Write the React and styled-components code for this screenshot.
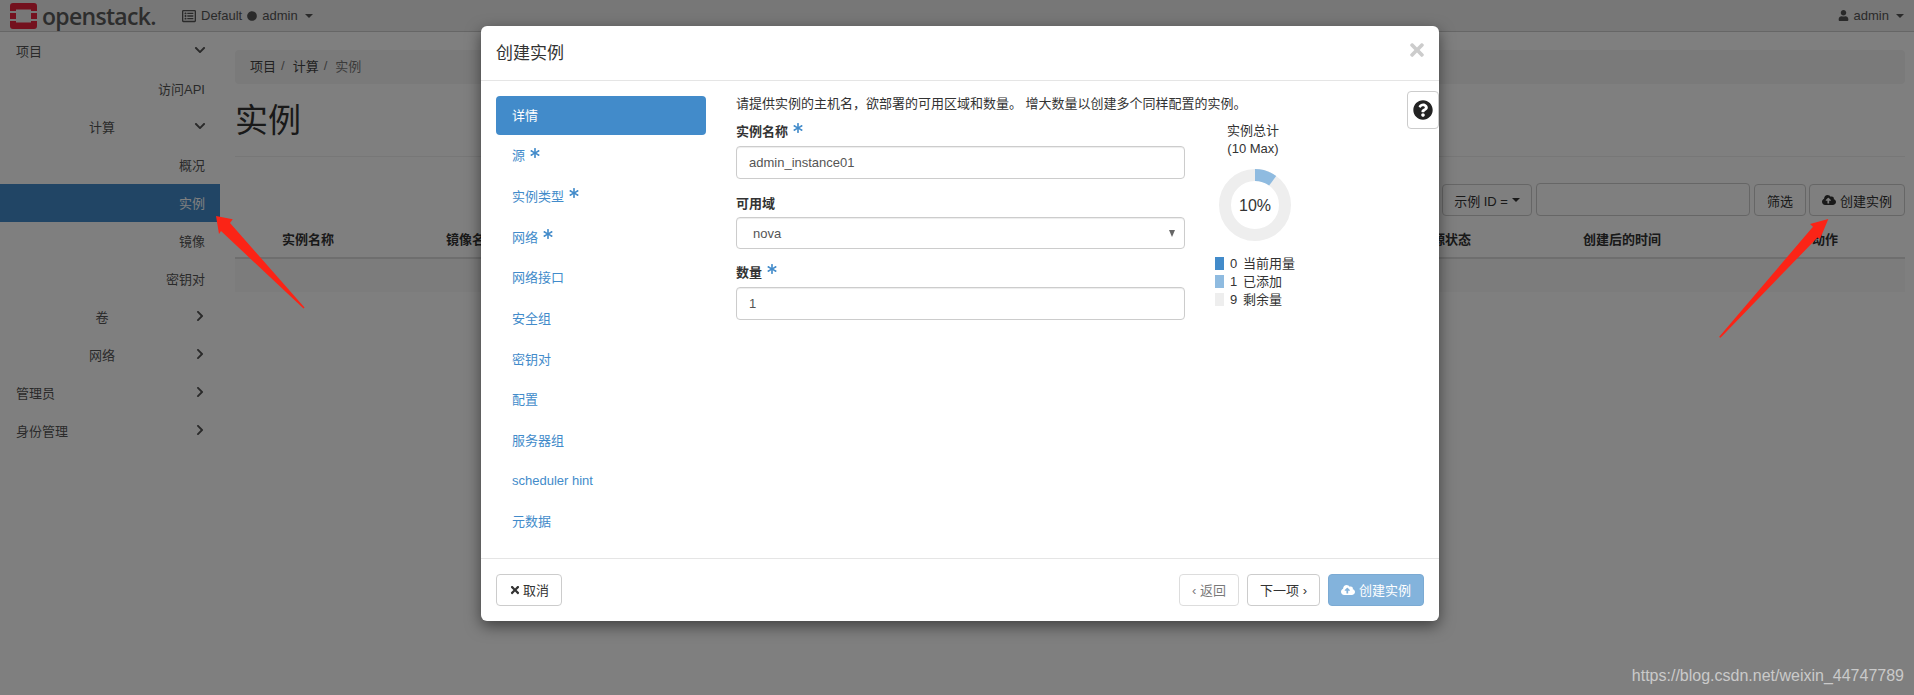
import styled, { createGlobalStyle } from 'styled-components';
import {
  FaAsterisk,
  FaChevronDown,
  FaChevronRight,
  FaCircle,
  FaCloudUploadAlt,
  FaQuestionCircle,
  FaRegListAlt,
  FaTimes,
  FaUser,
} from 'react-icons/fa';

const GlobalStyle = createGlobalStyle`
  html, body {
    margin: 0;
    height: 100%;
    background: #fff;
    font-family: "Liberation Sans", "Noto Sans CJK SC", sans-serif;
    font-size: 13px;
    color: #333;
  }
  * { box-sizing: border-box; }
`;

const Root = styled.div`
  position: relative;
  width: 100%;
  height: 100vh;
  overflow: hidden;
`;

/* page behind the dialog */
const TopBar = styled.header`
  height: 32px;
  display: flex;
  align-items: center;
  background: #eee;
  border-bottom: 1px solid #ccc;
  color: #555;
  padding: 0 10px;
`;

const Brand = styled.div`
  display: flex;
  align-items: center;
  gap: 5px;
  width: 172px;
`;

const BrandName = styled.span`
  font-family: "Open Sans", sans-serif;
  font-size: 23px;
  font-weight: 600;
  letter-spacing: -0.7px;
  line-height: 26px;
  color: #5a5a5a;
`;

const Scope = styled.div`
  display: flex;
  align-items: center;
  gap: 5px;
  font-size: 13px;
`;

const UserMenu = styled(Scope)`
  margin-left: auto;
`;

const Caret = styled.i`
  width: 0;
  height: 0;
  margin-left: 2px;
  border-top: 4px solid ${(p) => p.$color || '#555'};
  border-left: 4px solid transparent;
  border-right: 4px solid transparent;
`;

const Layout = styled.div`
  display: flex;
`;

const Sidebar = styled.nav`
  width: 220px;
  flex: none;
`;

const SideRow = styled.div`
  height: 38px;
  display: flex;
  align-items: center;
  padding: 0 15px 2px 16px;
  color: ${(p) => (p.$active ? '#fff' : '#555')};
  background: ${(p) => (p.$active ? '#428bca' : 'transparent')};
`;

const SideLabel = styled.span`
  flex: 1;
  text-align: ${(p) => ['left', 'center', 'right'][p.$level]};
`;

const SideArrow = styled.span`
  width: 18px;
  display: flex;
  justify-content: flex-end;
  color: #555;
  margin-right: -1px;
`;

const Main = styled.main`
  flex: 1;
  padding: 18px 9px 0 15px;
`;

const Breadcrumb = styled.div`
  height: 34px;
  display: flex;
  align-items: center;
  gap: 5px;
  padding: 0 0 3px 15px;
  border-radius: 4px;
  background: #f5f5f5;
`;

const Crumb = styled.span`
  color: ${(p) => (p.$current ? '#777' : '#444')};
`;

const Slash = styled.span`
  color: #777;
  margin-right: 3px;
`;

const PageHeader = styled.div`
  height: 73px;
  border-bottom: 1px solid #eee;
  padding-top: 16px;
`;

const PageTitle = styled.h1`
  margin: 0;
  font-size: 33px;
  font-weight: 400;
  line-height: 42px;
  color: #333;
`;

const FilterRow = styled.div`
  height: 33px;
  margin-top: 26px;
  display: flex;
  justify-content: flex-end;
  align-items: flex-end;
  gap: 4px;

  & > :last-child {
    margin-left: -1px;
  }
`;

const PlainButton = styled.button`
  height: 32px;
  padding: 0 12px;
  display: inline-flex;
  align-items: center;
  gap: ${(p) => p.$gap || 4}px;
  font: inherit;
  color: #333;
  background: #fff;
  border: 1px solid #ccc;
  border-radius: 4px;
  opacity: ${(p) => (p.disabled ? 0.65 : 1)};
`;

const FilterSelect = styled(PlainButton)`
  padding: 0 11px;
  gap: 2px;
`;

const FilterField = styled.div`
  width: 214px;
  height: 33px;
  border: 1px solid #ccc;
  border-radius: 4px;
  background: #fff;
`;

const TableHead = styled.div`
  height: 43px;
  display: grid;
  grid-template-columns: 164px 973px 164px 229px 1fr;
  align-items: center;
  padding: 4px 0 0 47px;
  border-bottom: 2px solid #ddd;
  font-weight: 700;
  color: #333;
`;

const EmptyRow = styled.div`
  height: 33px;
  background: #f9f9f9;
`;

/* dialog */
const Backdrop = styled.div`
  position: absolute;
  inset: 0;
  background: rgba(0, 0, 0, 0.5);
`;

const Dialog = styled.section`
  position: relative;
  width: 958px;
  margin: 26px 0 0 481px;
  background: #fff;
  border-radius: 6px;
  box-shadow: 0 5px 15px rgba(0, 0, 0, 0.5);
`;

const DialogHeader = styled.div`
  height: 55px;
  display: flex;
  align-items: center;
  justify-content: space-between;
  padding: 0 12px 3px 15px;
  border-bottom: 1px solid #e5e5e5;
`;

const DialogTitle = styled.h4`
  margin: 0;
  font-size: 17px;
  font-weight: 400;
  color: #333;
`;

const Close = styled.span`
  display: flex;
  color: #ccc;
  margin-top: -3px;
`;

const HelpTab = styled.div`
  position: absolute;
  top: 65px;
  right: 0;
  width: 32px;
  height: 38px;
  display: flex;
  align-items: center;
  justify-content: center;
  border: 1px solid #ccc;
  border-radius: 4px;
  background: #fff;
  color: #222;
`;

const DialogBody = styled.div`
  display: flex;
  padding: 15px 0 16px 15px;
`;

const StepList = styled.ul`
  width: 210px;
  flex: none;
  margin: 0 30px 0 0;
  padding: 0;
  list-style: none;
  display: flex;
  flex-direction: column;
  gap: 1.7px;
`;

const Step = styled.li`
  height: 39px;
  display: flex;
  align-items: center;
  gap: 5px;
  padding: 0 0 3px 16px;
  border-radius: 4px;
  color: ${(p) => (p.$active ? '#fff' : '#428bca')};
  background: ${(p) => (p.$active ? '#428bca' : 'transparent')};
`;

const Star = styled(FaAsterisk)`
  color: #428bca;
  font-size: 10px;
  margin-top: -4px;
`;

const Form = styled.div`
  width: 449px;
  flex: none;
`;

const Hint = styled.p`
  margin: -1px 0 8px;
  width: 640px;
  line-height: 18px;
  color: #333;
`;

const Field = styled.div`
  margin-bottom: ${(p) => p.$gap || 14}px;
`;

const Label = styled.label`
  display: flex;
  align-items: center;
  gap: 5px;
  height: 18px;
  margin-bottom: ${(p) => p.$gap || 6}px;
  font-weight: 700;
  color: #333;
`;

const TextInput = styled.input`
  display: block;
  width: 100%;
  height: 33px;
  padding: 0 12px;
  font: inherit;
  color: #555;
  background: #fff;
  border: 1px solid #ccc;
  border-radius: 4px;
  box-shadow: inset 0 1px 1px rgba(0, 0, 0, 0.075);
  outline: none;
`;

const SelectBox = styled.div`
  height: 32px;
  display: flex;
  align-items: center;
  justify-content: space-between;
  padding: 0 9px 0 16px;
  color: #555;
  border: 1px solid #ccc;
  border-radius: 4px;
  box-shadow: inset 0 1px 1px rgba(0, 0, 0, 0.075);
`;

const SelectArrow = styled.i`
  width: 0;
  height: 0;
  border-top: 7px solid #666;
  border-left: 3.5px solid transparent;
  border-right: 3.5px solid transparent;
`;

const Quota = styled.aside`
  width: 76px;
  margin-left: 30px;
  padding-top: 26px;
  white-space: nowrap;
`;

const QuotaTitle = styled.div`
  text-align: center;
  line-height: 18px;
  color: #333;
`;

const Donut = styled.svg`
  display: block;
  margin: 11px 0 16px 4px;
`;

const DonutText = styled.text`
  font-size: 16px;
  fill: #333;
`;

const Legend = styled.div`
  display: flex;
  flex-direction: column;
  gap: 5px;
`;

const LegendRow = styled.div`
  height: 13px;
  display: flex;
  align-items: center;
  line-height: 13px;
  color: #333;
`;

const Swatch = styled.i`
  flex: none;
  width: 9px;
  height: 13px;
  margin-right: 6px;
  background: ${(p) => p.$color};
`;

const Count = styled.span`
  flex: none;
  width: 13px;
`;

const DialogFooter = styled.div`
  height: 63px;
  display: flex;
  align-items: flex-start;
  justify-content: space-between;
  padding: 15px;
  border-top: 1px solid #e5e5e5;
`;

const FooterActions = styled.div`
  display: flex;
  gap: 8px;
`;

const SubmitButton = styled(PlainButton)`
  color: #fff;
  background: #428bca;
  border-color: #357ebd;
`;

const RedArrow = styled.svg`
  position: absolute;
  left: ${(p) => p.$left}px;
  top: ${(p) => p.$top}px;
`;

const Watermark = styled.div`
  position: absolute;
  right: 10px;
  bottom: 9px;
  font-size: 16px;
  line-height: 20px;
  color: #cacaca;
`;

const sideItems = [
  { label: '项目', level: 0, arrow: 'down' },
  { label: '访问API', level: 2 },
  { label: '计算', level: 1, arrow: 'down' },
  { label: '概况', level: 2 },
  { label: '实例', level: 2, active: true },
  { label: '镜像', level: 2 },
  { label: '密钥对', level: 2 },
  { label: '卷', level: 1, arrow: 'right' },
  { label: '网络', level: 1, arrow: 'right' },
  { label: '管理员', level: 0, arrow: 'right' },
  { label: '身份管理', level: 0, arrow: 'right' },
];

const steps = [
  { label: '详情', active: true },
  { label: '源', required: true },
  { label: '实例类型', required: true },
  { label: '网络', required: true },
  { label: '网络接口' },
  { label: '安全组' },
  { label: '密钥对' },
  { label: '配置' },
  { label: '服务器组' },
  { label: 'scheduler hint' },
  { label: '元数据' },
];

const legend = [
  { color: '#428bca', count: 0, label: '当前用量' },
  { color: '#8fbbe0', count: 1, label: '已添加' },
  { color: '#eee', count: 9, label: '剩余量' },
];

const Logo = () => (
  <svg width="27" height="26" viewBox="0 0 27 26">
    <path d="M0 8V3a3 3 0 0 1 3-3h21a3 3 0 0 1 3 3v5h-6V6.500H6V8z" fill="#e8223c" />
    <rect x="0" y="10" width="6" height="6" fill="#e8223c" />
    <rect x="21" y="10" width="6" height="6" fill="#e8223c" />
    <path d="M0 18v5a3 3 0 0 0 3 3h21a3 3 0 0 0 3-3v-5h-6v1.500H6V18z" fill="#e8223c" />
  </svg>
);

const App = () => {
  return (
    <Root>
      <GlobalStyle />
      <TopBar>
        <Brand>
          <Logo />
          <BrandName>openstack.</BrandName>
        </Brand>
        <Scope>
          <FaRegListAlt size={14} />
          <span>Default</span>
          <FaCircle size={10} />
          <span>admin</span>
          <Caret />
        </Scope>
        <UserMenu>
          <FaUser size={11} />
          <span>admin</span>
          <Caret />
        </UserMenu>
      </TopBar>
      <Layout>
        <Sidebar>
          {sideItems.map((item) => (
            <SideRow key={item.label} $active={item.active}>
              <SideLabel $level={item.level}>{item.label}</SideLabel>
              {item.arrow && (
                <SideArrow>
                  {item.arrow === 'down' ? <FaChevronDown size={12} /> : <FaChevronRight size={12} />}
                </SideArrow>
              )}
            </SideRow>
          ))}
        </Sidebar>
        <Main>
          <Breadcrumb>
            <Crumb>项目</Crumb>
            <Slash>/</Slash>
            <Crumb>计算</Crumb>
            <Slash>/</Slash>
            <Crumb $current>实例</Crumb>
          </Breadcrumb>
          <PageHeader>
            <PageTitle>实例</PageTitle>
          </PageHeader>
          <FilterRow>
            <FilterSelect>
              示例 ID =
              <Caret $color="#333" />
            </FilterSelect>
            <FilterField />
            <PlainButton>筛选</PlainButton>
            <PlainButton>
              <FaCloudUploadAlt size={14} />
              创建实例
            </PlainButton>
          </FilterRow>
          <TableHead>
            <span>实例名称</span>
            <span>镜像名称</span>
            <span>电源状态</span>
            <span>创建后的时间</span>
            <span>动作</span>
          </TableHead>
          <EmptyRow />
        </Main>
      </Layout>

      <Backdrop>
        <Dialog>
          <DialogHeader>
            <DialogTitle>创建实例</DialogTitle>
            <Close>
              <FaTimes size={20} />
            </Close>
          </DialogHeader>
          <HelpTab>
            <FaQuestionCircle size={20} />
          </HelpTab>
          <DialogBody>
            <StepList>
              {steps.map((step) => (
                <Step key={step.label} $active={step.active}>
                  {step.label}
                  {step.required && <Star />}
                </Step>
              ))}
            </StepList>
            <Form>
              <Hint>请提供实例的主机名，欲部署的可用区域和数量。 增大数量以创建多个同样配置的实例。</Hint>
              <Field>
                <Label $gap={7}>
                  实例名称 <Star />
                </Label>
                <TextInput readOnly value="admin_instance01" />
              </Field>
              <Field $gap={13}>
                <Label>可用域</Label>
                <SelectBox>
                  nova
                  <SelectArrow />
                </SelectBox>
              </Field>
              <Field>
                <Label $gap={7}>
                  数量 <Star />
                </Label>
                <TextInput readOnly value="1" />
              </Field>
            </Form>
            <Quota>
              <QuotaTitle>实例总计</QuotaTitle>
              <QuotaTitle>(10 Max)</QuotaTitle>
              <Donut width="72" height="72" viewBox="0 0 72 72">
                <circle cx="36" cy="36" r="30" fill="none" stroke="#eee" strokeWidth="12" />
                <circle
                  cx="36"
                  cy="36"
                  r="30"
                  fill="none"
                  stroke="#8fbbe0"
                  strokeWidth="12"
                  strokeDasharray="18.85 169.65"
                  transform="rotate(-90 36 36)"
                />
                <DonutText x="36" y="42" textAnchor="middle">
                  10%
                </DonutText>
              </Donut>
              <Legend>
                {legend.map((row) => (
                  <LegendRow key={row.label}>
                    <Swatch $color={row.color} />
                    <Count>{row.count}</Count>
                    {row.label}
                  </LegendRow>
                ))}
              </Legend>
            </Quota>
          </DialogBody>
          <DialogFooter>
            <PlainButton $gap={2}>
              <FaTimes size={12} />
              取消
            </PlainButton>
            <FooterActions>
              <PlainButton disabled>‹ 返回</PlainButton>
              <PlainButton>下一项 ›</PlainButton>
              <SubmitButton disabled>
                <FaCloudUploadAlt size={14} />
                创建实例
              </SubmitButton>
            </FooterActions>
          </DialogFooter>
        </Dialog>
      </Backdrop>

      <RedArrow $left={214} $top={214} width="92" height="96" viewBox="0 0 92 96">
        <polygon points="2,2 18.700,5.300 16,9 90.500,93.500 89.500,94.500 7,17 5,20" fill="#fb2416" />
      </RedArrow>
      <RedArrow $left={1718} $top={217} width="112" height="122" viewBox="0 0 112 122">
        <polygon points="110.300,2 92,7 95,9.700 1,120 2.500,120.800 99.500,20.500 102,22" fill="#fb2416" />
      </RedArrow>
      <Watermark>https://blog.csdn.net/weixin_44747789</Watermark>
    </Root>
  );
};

export default App;
